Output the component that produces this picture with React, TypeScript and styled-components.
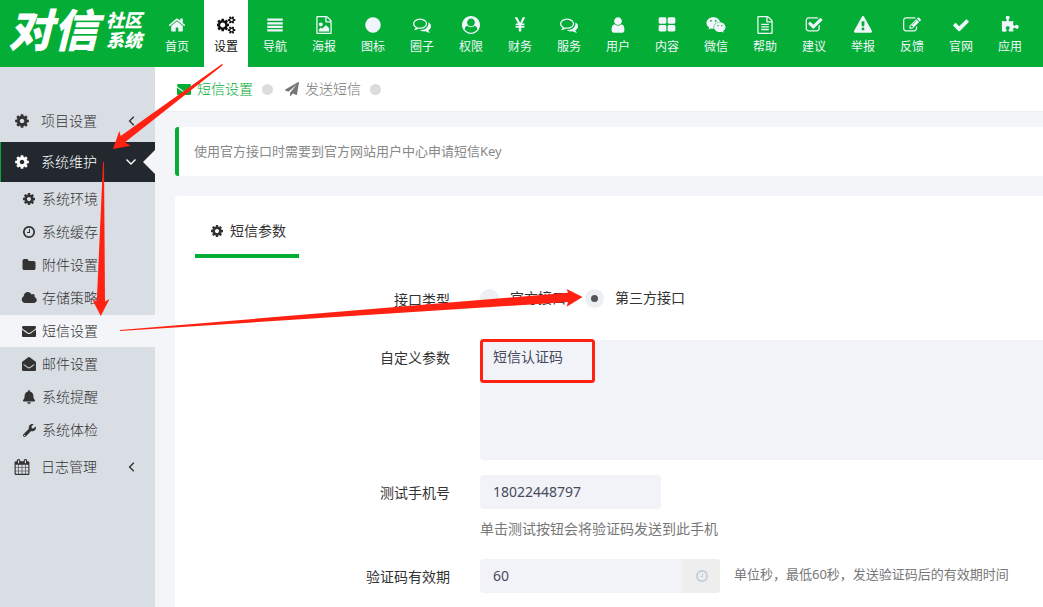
import React from 'react';
import styled, { createGlobalStyle, css } from 'styled-components';
import { FaBell, FaEnvelopeOpen, FaWeixin, FaWrench } from 'react-icons/fa';

const green = '#04ae36';
const red = '#ff2212';

const GlobalStyle = createGlobalStyle`
  *, *::before, *::after { box-sizing: border-box; }
  body {
    margin: 0;
    background: #f4f5f8;
    color: #333;
    font: 14px/20px "Noto Sans", "Noto Sans CJK SC", sans-serif;
  }
  a { color: inherit; text-decoration: none; }
  button, input, textarea { font: inherit; color: inherit; border: 0; margin: 0; }
  svg { display: block; flex: none; }
`;

type IconShape = { d: string; w?: number };

const CALENDAR_D =
  'M192 1664h288v-288h-288v288zm352 0h320v-288h-320v288zm-352-352h288v-320h-288v320zm352 0h320v-320h-320v320zm-352-384h288v-288h-288v288zm736 736h320v-288h-320v288zm-384-736h320v-288h-320v288zm768 736h288v-288h-288v288zm-384-352h320v-320h-320v320zm-352-864v-288q0-13-9.5-22.5t-22.5-9.5h-64q-13 0-22.5 9.5t-9.5 22.5v288q0 13 9.5 22.5t22.5 9.5h64q13 0 22.5-9.5t9.5-22.5zm736 864h288v-320h-288v320zm-384-384h320v-288h-320v288zm384 0h288v-288h-288v288zm32-480v-288q0-13-9.5-22.5t-22.5-9.5h-64q-13 0-22.5 9.5t-9.5 22.5v288q0 13 9.5 22.5t22.5 9.5h64q13 0 22.5-9.5t9.5-22.5zm384-64v1280q0 52-38 90t-90 38h-1408q-52 0-90-38t-38-90v-1280q0-52 38-90t90-38h128v-96q0-66 47-113t113-47h64q66 0 113 47t47 113v96h384v-96q0-66 47-113t113-47h64q66 0 113 47t47 113v96h128q52 0 90 38t38 90z';

const icons: Record<string, IconShape> = {
  home: { d: 'M1472 992v480q0 26-19 45t-45 19h-384v-384h-256v384h-384q-26 0-45-19t-19-45v-480q0-1 .5-3t.5-3l575-474 575 474q1 2 1 6zm223-69l-62 74q-8 9-21 11h-3q-13 0-21-7l-692-577-692 577q-12 8-24 7-13-2-21-11l-62-74q-8-10-7-23.5t11-21.5l719-599q32-26 76-26t76 26l244 204v-195q0-14 9-23t23-9h192q14 0 23 9t9 23v408l219 182q10 8 11 21.5t-7 23.5z' },
  cog: { d: 'M1152 896q0-106-75-181t-181-75-181 75-75 181 75 181 181 75 181-75 75-181zm512-109v222q0 12-8 23t-20 13l-185 28q-19 54-39 91 35 50 107 138 10 12 10 25t-9 23q-27 37-99 108t-94 71q-12 0-26-9l-138-108q-44 23-91 38-16 136-29 186-7 28-36 28h-222q-14 0-24.5-8.5t-11.5-21.5l-28-184q-49-16-90-37l-141 107q-10 9-25 9-14 0-25-11-126-114-165-168-7-10-7-23 0-12 8-23 15-21 51-66.5t54-70.5q-27-50-41-99l-183-27q-13-2-21-12.5t-8-23.5v-222q0-12 8-23t19-13l186-28q14-46 39-92-40-57-107-138-10-12-10-24 0-10 9-23 26-36 98.5-107.5t94.5-71.5q13 0 26 10l138 107q44-23 91-38 16-136 29-186 7-28 36-28h222q14 0 24.5 8.5t11.5 21.5l28 184q49 16 90 37l142-107q9-9 24-9 13 0 25 10 129 119 165 170 7 8 7 22 0 12-8 23-15 21-51 66.5t-54 70.5q26 50 41 98l183 28q13 2 21 12.5t8 23.5z' },
  cogs: { w: 1920, d: 'M832 896q0-106-75-181t-181-75-181 75-75 181 75 181 181 75 181-75 75-181zm768 512q0-52-38-90t-90-38-90 38-38 90q0 53 37.5 90.5t90.5 37.5 90.5-37.5 37.5-90.5zm0-1024q0-52-38-90t-90-38-90 38-38 90q0 53 37.5 90.5t90.5 37.5 90.5-37.5 37.5-90.5zm-384 421v185q0 10-7 19.5t-16 10.5l-155 24q-11 35-32 76 34 48 90 115 7 11 7 20 0 12-7 19-23 30-82.5 89.5t-78.5 59.5q-11 0-21-7l-115-90q-37 19-77 31-11 108-23 155-7 24-30 24h-186q-11 0-20-7.5t-10-17.5l-23-153q-34-10-75-31l-118 89q-7 7-20 7-11 0-21-8-144-133-144-160 0-9 7-19 10-14 41-53t47-61q-23-44-35-82l-152-24q-10-1-17-9.5t-7-19.5v-185q0-10 7-19.5t16-10.5l155-24q11-35 32-76-34-48-90-115-7-11-7-20 0-12 7-20 22-30 82-89t79-59q11 0 21 7l115 90q34-18 77-32 11-108 23-154 7-24 30-24h186q11 0 20 7.5t10 17.5l23 153q34 10 75 31l118-89q8-7 20-7 11 0 21 8 144 133 144 160 0 8-7 19-12 16-42 54t-45 60q23 48 34 82l152 23q10 2 17 10.5t7 19.5zm640 533v140q0 16-149 31-12 27-30 52 51 113 51 138 0 4-4 7-122 71-124 71-8 0-46-47t-52-68q-20 2-30 2t-30-2q-14 21-52 68t-46 47q-2 0-124-71-4-3-4-7 0-25 51-138-18-25-30-52-149-15-149-31v-140q0-16 149-31 13-29 30-52-51-113-51-138 0-4 4-7 4-2 35-20t59-34 30-16q8 0 46 46.5t52 67.5q20-2 30-2t30 2q51-71 92-112l6-2q4 0 124 70 4 3 4 7 0 25-51 138 17 23 30 52 149 15 149 31zm0-1024v140q0 16-149 31-12 27-30 52 51 113 51 138 0 4-4 7-122 71-124 71-8 0-46-47t-52-68q-20 2-30 2t-30-2q-14 21-52 68t-46 47q-2 0-124-71-4-3-4-7 0-25 51-138-18-25-30-52-149-15-149-31v-140q0-16 149-31 13-29 30-52-51-113-51-138 0-4 4-7 4-2 35-20t59-34 30-16q8 0 46 46.5t52 67.5q20-2 30-2t30 2q51-71 92-112l6-2q4 0 124 70 4 3 4 7 0 25-51 138 17 23 30 52 149 15 149 31z' },
  bars: { d: 'M128 1320h1536v216h-1536zM128 980h1536v216h-1536zM128 620h1536v216h-1536zM128 256h1536v216h-1536z' },
  image: { d: 'M1596 380q28 28 48 76t20 88v1152q0 40-28 68t-68 28h-1344q-40 0-68-28t-28-68v-1600q0-40 28-68t68-28h896q40 0 88 20t76 48zm-444-244v376h376q-10-29-22-41l-313-313q-12-12-41-22zm384 1528v-1024h-416q-40 0-68-28t-28-68v-416h-768v1536h1280zm-128-448v320h-1024v-192l192-192 128 128 384-384zm-832-192q-80 0-136-56t-56-136 56-136 136-56 136 56 56 136-56 136-136 56z' },
  circle: { d: 'M1664 896q0 209-103 385.5t-279.5 279.5-385.5 103-385.5-103-279.5-279.5-103-385.5 103-385.5 279.5-279.5 385.5-103 385.5 103 279.5 279.5 103 385.5z' },
  comments: { d: 'M704 384q-153 0-286 52t-211.5 141-78.5 191q0 82 53 158t149 132l97 56-35 84q34-20 62-39l44-31 53 10q78 14 153 14 153 0 286-52t211.5-141 78.5-191-78.5-191-211.5-141-286-52zm0-128q191 0 353.5 68.5t256.5 186.5 94 257-94 257-256.5 186.5-353.5 68.5q-86 0-176-16-124 88-278 128-36 9-86 16h-3q-11 0-20.5-8t-11.5-21q-1-3-1-6.5t.5-6.5 2-6l2.5-5 3.5-5.5 4-5 4.5-5 4-4.5q5-6 23-25t26-29.5 22.5-29 25-38.5 20.5-44q-124-72-195-177t-71-224q0-139 94-257t256.5-186.5 353.5-68.5zm822 1169q10 24 20.5 44t25 38.5 22.5 29 26 29.5 23 25q1 1 4 4.5t4.5 5 4 5 3.5 5.5l2.5 5 2 6 .5 6.5-1 6.5q-3 14-13 22t-22 7q-50-7-86-16-154-40-278-128-90 16-176 16-271 0-472-132 58 4 88 4 161 0 309-45t264-129q125-92 192-212t67-254q0-77-23-152 129 71 204 178t75 230q0 120-71 224.5t-195 176.5z' },
  account: { d: 'M1523 1339q-22-155-87.5-257.5t-184.5-118.5q-67 74-159.5 115.5t-195.5 41.5-195.5-41.5-159.5-115.5q-119 16-184.5 118.5t-87.5 257.5q106 150 271 237.5t356 87.5 356-87.5 271-237.5zm-243-699q0-159-112.5-271.5t-271.5-112.5-271.5 112.5-112.5 271.5 112.5 271.5 271.5 112.5 271.5-112.5 112.5-271.5zm512 256q0 182-71 347.5t-190.5 286-285.5 191.5-349 71q-182 0-348-71t-286-191-191-286-71-348 71-348 191-286 286-191 348-71 348 71 286 191 191 286 71 348z' },
  yen: { d: 'M985.5 1536h-172q-13 0-22.5-9t-9.5-23v-330h-288q-13 0-22.5-9t-9.5-23v-103q0-13 9.5-22.5t22.5-9.5h288v-85h-288q-13 0-22.5-9t-9.5-23v-104q0-13 9.5-22.5t22.5-9.5h214l-321-578q-8-16 0-32 10-16 28-16h194q19 0 29 18l215 425q19 38 56 125 10-24 30.5-68t27.5-61l191-420q8-19 29-19h191q17 0 27 16 9 14 1 31l-313 579h215q13 0 22.5 9.5t9.5 22.5v104q0 14-9.5 23t-22.5 9h-290v85h290q13 0 22.5 9.5t9.5 22.5v103q0 14-9.5 23t-22.5 9h-290v330q0 13-9.5 22.5t-22.5 9.5z' },
  user: { d: 'M1536 1399q0 109-62.5 187t-150.5 78h-854q-88 0-150.5-78t-62.5-187q0-85 8.5-160.5t31.5-152 58.5-131 94-89 134.5-34.5q131 128 313 128t313-128q76 0 134.5 34.5t94 89 58.5 131 31.5 152 8.5 160.5zm-256-887q0 159-112.5 271.5t-271.5 112.5-271.5-112.5-112.5-271.5 112.5-271.5 271.5-112.5 271.5 112.5 112.5 271.5z' },
  grid: { d: 'M832 1024v384q0 52-38 90t-90 38h-512q-52 0-90-38t-38-90v-384q0-52 38-90t90-38h512q52 0 90 38t38 90zm0-768v384q0 52-38 90t-90 38h-512q-52 0-90-38t-38-90v-384q0-52 38-90t90-38h512q52 0 90 38t38 90zm896 768v384q0 52-38 90t-90 38h-512q-52 0-90-38t-38-90v-384q0-52 38-90t90-38h512q52 0 90 38t38 90zm0-768v384q0 52-38 90t-90 38h-512q-52 0-90-38t-38-90v-384q0-52 38-90t90-38h512q52 0 90 38t38 90z' },
  file: { d: 'M1596 380q28 28 48 76t20 88v1152q0 40-28 68t-68 28h-1344q-40 0-68-28t-28-68v-1600q0-40 28-68t68-28h896q40 0 88 20t76 48zm-444-244v376h376q-10-29-22-41l-313-313q-12-12-41-22zm384 1528v-1024h-416q-40 0-68-28t-28-68v-416h-768v1536h1280zm-1024-864q0-14 9-23t23-9h704q14 0 23 9t9 23v64q0 14-9 23t-23 9h-704q-14 0-23-9t-9-23v-64zm736 224q14 0 23 9t9 23v64q0 14-9 23t-23 9h-704q-14 0-23-9t-9-23v-64q0-14 9-23t23-9h704zm0 256q14 0 23 9t9 23v64q0 14-9 23t-23 9h-704q-14 0-23-9t-9-23v-64q0-14 9-23t23-9h704z' },
  checkbox: { d: 'M1472 930v318q0 119-84.5 203.5t-203.5 84.5h-832q-119 0-203.5-84.5t-84.5-203.5v-832q0-119 84.5-203.5t203.5-84.5h832q63 0 117 25 15 7 18 23 3 17-9 29l-49 49q-10 10-23 10-3 0-9-2-23-6-45-6h-832q-66 0-113 47t-47 113v832q0 66 47 113t113 47h832q66 0 113-47t47-113v-254q0-13 9-22l64-64q10-10 23-10 6 0 12 3 20 8 20 29zm231-489l-814 814q-24 24-57 24t-57-24l-430-430q-24-24-24-57t24-57l110-110q24-24 57-24t57 24l263 263 647-647q24-24 57-24t57 24l110 110q24 24 24 57t-24 57z' },
  warning: { d: 'M1024 1375v-190q0-14-9.5-23.5t-22.5-9.5h-192q-13 0-22.5 9.5t-9.5 23.5v190q0 14 9.5 23.5t22.5 9.5h192q13 0 22.5-9.5t9.5-23.5zm-2-374l18-459q0-12-10-19-13-11-24-11h-220q-11 0-24 11-10 7-10 21l17 457q0 10 10 16.5t24 6.5h185q14 0 23.5-6.5t10.5-16.5zm-14-934l768 1408q35 63-2 126-17 29-46.5 46t-63.5 17h-1536q-34 0-63.5-17t-46.5-46q-37-63-2-126l768-1408q17-31 47-49t65-18 65 18 47 49z' },
  edit: { d: 'M888 1184l116-116-152-152-116 116v56h96v96h56zm440-720q-16-16-33 1l-350 350q-17 17-1 33t33-1l350-350q17-17 1-33zm80 594v190q0 119-84.5 203.5t-203.5 84.5h-832q-119 0-203.5-84.5t-84.5-203.5v-832q0-119 84.5-203.5t203.5-84.5h832q63 0 117 25 15 7 18 23 3 17-9 29l-49 49q-14 14-32 8-23-6-45-6h-832q-66 0-113 47t-47 113v832q0 66 47 113t113 47h832q66 0 113-47t47-113v-126q0-13 9-22l64-64q15-15 35-7t20 29zm-96-738l288 288-672 672h-288v-288zm444 132l-92 92-288-288 92-92q28-28 68-28t68 28l152 152q28 28 28 68t-28 68z' },
  check: { d: 'M1671 566q0 40-28 68l-724 724-136 136q-28 28-68 28t-68-28l-136-136-362-362q-28-28-28-68t28-68l136-136q28-28 68-28t68 28l294 295 656-657q28-28 68-28t68 28l136 136q28 28 28 68z' },
  puzzle: { d: 'M1755 1083q0 81-44.5 135t-123.5 54q-41 0-77.5-17.5t-59-38-56.5-38-71-17.5q-110 0-110 124 0 39 16 115t15 115v5q-22 0-33 1-34 3-97.5 11.5t-115.5 13.5-98 5q-61 0-103-26.5t-42-83.5q0-37 17.5-71t38-56.5 38-59 17.5-77.5q0-79-54-123.5t-135-44.5q-84 0-143 45.5t-59 127.5q0 43 15 83t33.5 64.5 33.5 53 15 50.5q0 45-46 89-37 35-117 35-95 0-245-24-9-2-27.5-4t-27.5-4l-13-2q-1 0-3-1-2 0-2-1v-1024q2 1 17.5 3.5t34 5 21.5 3.5q150 24 245 24 80 0 117-35 46-44 46-89 0-22-15-50.5t-33.5-53-33.5-64.5-15-83q0-82 59-127.5t144-45.5q80 0 134 44.5t54 123.5q0 41-17.5 77.5t-38 59-38 56.5-17.5 71q0 57 42 83.5t103 26.5q64 0 180-15t163-17v2q-1 2-3.5 17.5t-5 34-3.5 21.5q-24 150-24 245 0 80 35 117 44 46 89 46 22 0 50.5-15t53-33.5 64.5-33.5 83-15q82 0 127.5 59t45.5 143z' },
  clock: { d: 'M1024 544v448q0 14-9 23t-23 9h-320q-14 0-23-9t-9-23v-64q0-14 9-23t23-9h224v-352q0-14 9-23t23-9h64q14 0 23 9t9 23zm416 352q0-148-73-273t-198-198-273-73-273 73-198 198-73 273 73 273 198 198 273 73 273-73 198-198 73-273zm224 0q0 209-103 385.5t-279.5 279.5-385.5 103-385.5-103-279.5-279.5-103-385.5 103-385.5 279.5-279.5 385.5-103 385.5 103 279.5 279.5 103 385.5z' },
  folder: { d: 'M1728 608v704q0 92-66 158t-158 66h-1216q-92 0-158-66t-66-158v-960q0-92 66-158t158-66h320q92 0 158 66t66 158v32h672q92 0 158 66t66 158z' },
  cloud: { w: 1984, d: 'M1984 1152q0 159-112.5 271.5t-271.5 112.5h-1088q-185 0-316.5-131.5t-131.5-316.5q0-132 71-241.5t187-163.5q-2-28-2-43 0-212 150-362t362-150q158 0 286.5 88t187.5 230q70-62 166-62 106 0 181 75t75 181q0 75-41 138 129 30 213 134.5t84 239.5z' },
  envelope: { d: 'M1792 710v794q0 66-47 113t-113 47h-1472q-66 0-113-47t-47-113v-794q44 49 101 87 362 246 497 345 57 42 92.5 65.5t94.5 48 110 24.5h2q51 0 110-24.5t94.5-48 92.5-65.5q170-123 498-345 57-39 100-87zm0-294q0 79-49 151t-122 123q-376 261-468 325-10 7-42.5 30.5t-54 38-52 32.5-57.5 27-50 9h-2q-23 0-50-9t-57.5-27-52-32.5-54-38-42.5-30.5q-91-64-262-182.5t-205-142.5q-62-42-117-115.5t-55-136.5q0-78 41.5-130t118.5-52h1472q65 0 112.5 47t47.5 113z' },
  calendar: { d: CALENDAR_D },
  plane: { d: 'M1764 11q33 24 27 64l-256 1536q-5 29-32 45-14 8-31 8-11 0-24-5l-453-185-242 295q-18 23-49 23-13 0-22-4-19-7-30.5-23.5t-11.5-36.5v-349l864-1059-1069 925-395-162q-37-14-40-55-2-40 32-59l1664-960q15-9 32-9 20 0 36 11z' },
};

function Icon({ name, size }: { name: string; size: number }) {
  if (name === 'wechat') return <FaWeixin size={size + 2} />;
  if (name === 'bell') return <FaBell size={size} />;
  if (name === 'wrench') return <FaWrench size={size - 1} />;
  if (name === 'envelopeOpen') return <FaEnvelopeOpen size={size} />;
  const { d, w = 1792 } = icons[name];
  return (
    <svg
      width={Math.round((size * w) / 1792)}
      height={size}
      viewBox={`0 0 ${w} 1792`}
      fill="currentColor"
      aria-hidden="true"
    >
      <path d={d} />
    </svg>
  );
}

const Page = styled.div`
  position: relative;
  display: flex;
  flex-direction: column;
  min-height: 100vh;
  overflow: hidden;
`;

const Header = styled.header`
  display: flex;
  height: 67px;
  background: ${green};
  color: #fff;
`;

const Logo = styled.a`
  display: flex;
  flex: none;
  gap: 8px;
  width: 155px;
  padding-left: 8px;
  font-family: "Noto Sans CJK SC", sans-serif;
  font-weight: 900;
  font-style: italic;
`;

const LogoName = styled.span`
  font-size: 45px;
  line-height: 56px;
  white-space: nowrap;
`;

const LogoKind = styled.span`
  width: 40px;
  padding-top: 9px;
  font-size: 18px;
  line-height: 20px;
`;

const TopNav = styled.nav`
  display: flex;
  gap: 5px;
`;

const TopLink = styled.a<{ $active?: boolean }>`
  display: flex;
  flex: none;
  flex-direction: column;
  align-items: center;
  gap: 3px;
  width: 44px;
  padding-top: 16px;
  font-size: 12px;
  white-space: nowrap;
  color: #f0f5fb;
  ${(p) => p.$active && css`background: #fff; color: #111;`}
`;

const TopIcon = styled.span`
  display: flex;
  align-items: center;
  justify-content: center;
  height: 18px;
`;

const Body = styled.div`
  display: flex;
  flex: 1;
`;

const Sidebar = styled.nav`
  display: flex;
  flex: none;
  flex-direction: column;
  gap: 1px;
  width: 155px;
  padding-top: 34px;
  background: #d9dde4;
`;

const Group = styled.button<{ $open?: boolean }>`
  position: relative;
  display: flex;
  align-items: center;
  height: 40px;
  padding: 0 18px 1px 14px;
  background: none;
  text-align: left;
  color: #333;
  ${(p) =>
    p.$open &&
    css`
      background: #22282e;
      color: #fff;
      box-shadow: inset 1px 0 ${green};
      &::after {
        content: "";
        position: absolute;
        right: 0;
        top: 8px;
        border: 12px solid transparent;
        border-left-width: 0;
        border-right-color: #f4f5f8;
      }
    `}
`;

const GroupIcon = styled.span`
  display: flex;
  justify-content: center;
  width: 16px;
  margin-right: 11px;
`;

const GroupText = styled.span`
  flex: 1;
  font-weight: 300;
`;

const SubLink = styled.a<{ $active?: boolean }>`
  display: flex;
  align-items: center;
  height: 32px;
  padding-left: 21px;
  font-weight: 300;
  ${(p) => p.$active && css`background: #f4f5f8;`}
`;

const SubIcon = styled.span`
  display: flex;
  justify-content: center;
  width: 16px;
  margin-right: 5px;
`;

const Main = styled.main`
  display: flex;
  flex: 1;
  flex-direction: column;
  min-width: 0;
`;

const PageTabs = styled.nav`
  display: flex;
  height: 45px;
  padding-left: 22px;
  background: #fff;
  border-bottom: 1px solid #eceef1;
`;

const PageTab = styled.a<{ $active?: boolean }>`
  display: flex;
  align-items: center;
  gap: 6px;
  margin-right: 12px;
  font-weight: 300;
  color: ${(p) => (p.$active ? green : '#777')};
  &::after {
    content: "";
    width: 11px;
    height: 11px;
    margin-left: 3px;
    border-radius: 50%;
    background: #dcdcdc;
  }
`;

const Notice = styled.p`
  margin: 15px 0 20px 20px;
  padding: 14px 15px 15px;
  background: #fff;
  border-left: 4px solid ${green};
  border-radius: 3px 0 0 3px;
  font-size: 13px;
  color: #888;
`;

const Card = styled.section`
  flex: 1;
  margin-left: 20px;
  padding: 14px 0 0 20px;
  background: #fff;
  border-radius: 3px 0 0 0;
`;

const CardTab = styled.button`
  display: flex;
  align-items: center;
  gap: 6px;
  height: 48px;
  margin-bottom: 22px;
  padding: 0 13px 2px 15px;
  background: none;
  border-bottom: 4px solid ${green};
`;

const Form = styled.form`
  display: flex;
  flex-direction: column;
`;

const Field = styled.div<{ $after?: number }>`
  display: grid;
  grid-template-columns: 255px minmax(0, 1fr);
  column-gap: 30px;
  margin-bottom: ${(p) => p.$after ?? 15}px;
`;

const fieldLabel = css`
  padding-top: 8px;
  text-align: right;
`;

const FieldLabel = styled.label`
  ${fieldLabel}
`;

const FieldTitle = styled.span`
  ${fieldLabel}
  padding-top: 10px;
`;

const RadioRow = styled.div`
  display: flex;
  align-items: center;
  gap: 19px;
  height: 36px;
`;

const RadioLabel = styled.label`
  display: flex;
  align-items: center;
  gap: 11px;
`;

const Radio = styled.input`
  display: grid;
  place-content: center;
  appearance: none;
  width: 19px;
  height: 19px;
  border-radius: 50%;
  background: #edf0f3;
  &:checked::after {
    content: "";
    width: 7px;
    height: 7px;
    border-radius: 50%;
    background: #555;
  }
`;

const boxed = css`
  padding: 7px 13px;
  background: #f2f3f8;
  border-radius: 4px;
  outline: 0;
  color: #474a5c;
`;

const Area = styled.textarea`
  ${boxed}
  display: block;
  width: 100%;
  height: 120px;
  border-radius: 4px 0 0 4px;
  resize: none;
`;

const TextBox = styled.input`
  ${boxed}
  width: 181px;
  height: 34px;
  padding: 6px 13px 8px;
`;

const Hint = styled.p`
  margin: 10px 0 0;
  color: #777;
`;

const Inline = styled.div`
  display: flex;
  align-items: center;
`;

const ShortBox = styled(TextBox)`
  width: 203px;
  border-radius: 4px 0 0 4px;
`;

const Addon = styled.span`
  display: flex;
  align-items: center;
  justify-content: center;
  width: 37px;
  height: 34px;
  background: #eee;
  border-radius: 0 4px 4px 0;
  color: #c3cddc;
`;

const Unit = styled.span`
  margin-left: 14px;
  padding-bottom: 4px;
  font-size: 13px;
  color: #777;
`;

const Guides = styled.svg`
  position: absolute;
  top: 0;
  left: 0;
  pointer-events: none;
`;

const topLinks = [
  ['home', '首页'], ['cogs', '设置'], ['bars', '导航'], ['image', '海报'], ['circle', '图标'],
  ['comments', '圈子'], ['account', '权限'], ['yen', '财务'], ['comments', '服务'], ['user', '用户'],
  ['grid', '内容'], ['wechat', '微信'], ['file', '帮助'], ['checkbox', '建议'], ['warning', '举报'],
  ['edit', '反馈'], ['check', '官网'], ['puzzle', '应用'],
];

const subLinks = [
  ['cog', '系统环境'], ['clock', '系统缓存'], ['folder', '附件设置'], ['cloud', '存储策略'],
  ['envelope', '短信设置'], ['envelopeOpen', '邮件设置'], ['bell', '系统提醒'], ['wrench', '系统体检'],
];

function Chevron({ down }: { down?: boolean }) {
  return (
    <svg width="12" height="12" viewBox="0 0 12 12" fill="none" stroke="currentColor" strokeWidth="1.4">
      <path d={down ? 'M1.5 3.5 6 8l4.5-4.5' : 'M8.800 1.8 4.600 6 8.800 10.2'} />
    </svg>
  );
}

function MenuGroup({ icon, text, open }: { icon: string; text: string; open?: boolean }) {
  return (
    <Group type="button" $open={open} aria-expanded={!!open}>
      <GroupIcon><Icon name={icon} size={16} /></GroupIcon>
      <GroupText>{text}</GroupText>
      <Chevron down={open} />
    </Group>
  );
}

export default function App() {
  return (
    <Page>
      <GlobalStyle />
      <Header>
        <Logo href="#">
          <LogoName>对信</LogoName>
          <LogoKind>社区系统</LogoKind>
        </Logo>
        <TopNav>
          {topLinks.map(([icon, text]) => (
            <TopLink key={text} href="#" $active={text === '设置'}>
              <TopIcon><Icon name={icon} size={18} /></TopIcon>
              {text}
            </TopLink>
          ))}
        </TopNav>
      </Header>
      <Body>
        <Sidebar>
          <MenuGroup icon="cog" text="项目设置" />
          <MenuGroup icon="cog" text="系统维护" open />
          {subLinks.map(([icon, text]) => (
            <SubLink key={text} href="#" $active={text === '短信设置'}>
              <SubIcon><Icon name={icon} size={14} /></SubIcon>
              {text}
            </SubLink>
          ))}
          <MenuGroup icon="calendar" text="日志管理" />
        </Sidebar>
        <Main>
          <PageTabs>
            <PageTab href="#" $active><Icon name="envelope" size={14} />短信设置</PageTab>
            <PageTab href="#"><Icon name="plane" size={14} />发送短信</PageTab>
          </PageTabs>
          <Notice>使用官方接口时需要到官方网站用户中心申请短信Key</Notice>
          <Card>
            <CardTab type="button"><Icon name="cog" size={14} />短信参数</CardTab>
            <Form>
              <Field $after={24} role="radiogroup" aria-labelledby="api-type">
                <FieldTitle id="api-type">接口类型</FieldTitle>
                <RadioRow>
                  <RadioLabel><Radio type="radio" name="api" />官方接口</RadioLabel>
                  <RadioLabel><Radio type="radio" name="api" defaultChecked />第三方接口</RadioLabel>
                </RadioRow>
              </Field>
              <Field>
                <FieldLabel htmlFor="params">自定义参数</FieldLabel>
                <Area id="params" defaultValue="短信认证码" />
              </Field>
              <Field $after={20}>
                <FieldLabel htmlFor="phone">测试手机号</FieldLabel>
                <div>
                  <TextBox id="phone" type="text" defaultValue="18022448797" />
                  <Hint>单击测试按钮会将验证码发送到此手机</Hint>
                </div>
              </Field>
              <Field $after={0}>
                <FieldLabel htmlFor="ttl">验证码有效期</FieldLabel>
                <Inline>
                  <ShortBox id="ttl" type="text" defaultValue="60" />
                  <Addon><Icon name="clock" size={14} /></Addon>
                  <Unit>单位秒，最低60秒，发送验证码后的有效期时间</Unit>
                </Inline>
              </Field>
            </Form>
          </Card>
        </Main>
      </Body>
      <Guides width="700" height="400" viewBox="0 0 700 400" fill={red} aria-hidden="true">
        <path d="M113 149 119.3 131 120.7 136 222 64 223 65 125 142.3 130.5 145.7z" />
        <path d="M103 162h1l1 139.500 4.500-2.500-8.700 17-8.500-16.500 4.500 2z" />
        <path d="M120 330 568 292.700 566.700 289 582.500 297 566.700 306.700 568 302 120 331z" />
        <rect x="481.500" y="340.500" width="112" height="41" rx="2" fill="none" stroke={red} strokeWidth="3" />
      </Guides>
    </Page>
  );
}
